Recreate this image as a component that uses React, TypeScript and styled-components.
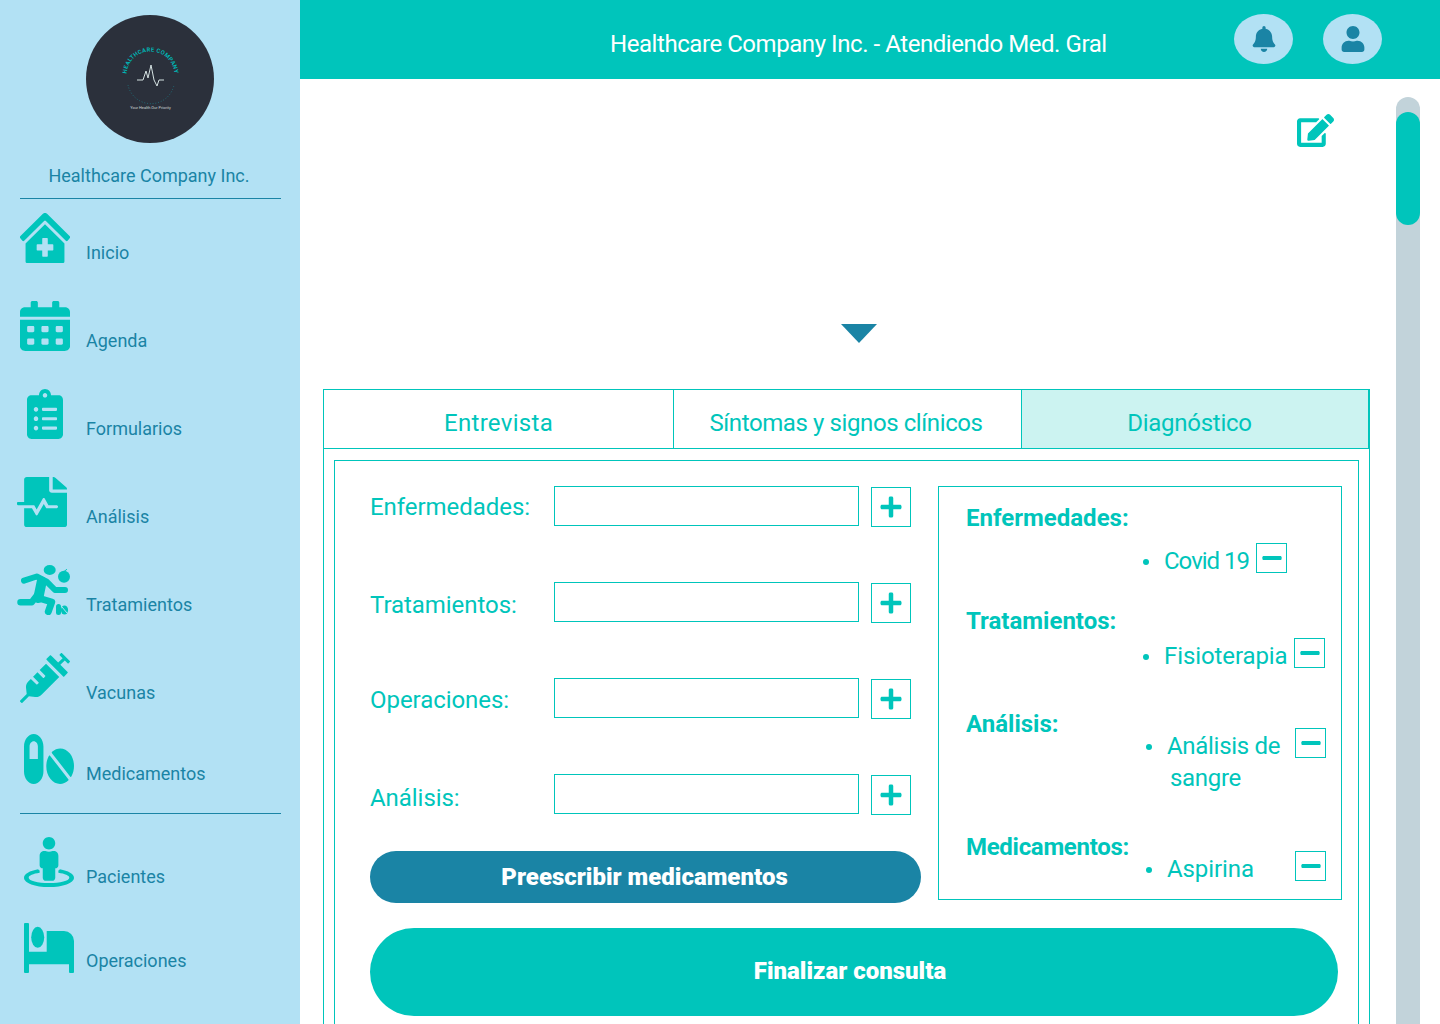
import React from 'react';
import styled, { createGlobalStyle } from 'styled-components';
import {
    FaBell,
    FaCalendarAlt,
    FaClinicMedical,
    FaClipboardList,
    FaEdit,
    FaFileMedicalAlt,
    FaMinus,
    FaPills,
    FaPlus,
    FaStreetView,
    FaSyringe,
    FaUser
} from 'react-icons/fa';

const TEAL = '#00c5bb';
const BLUE = '#1a84a5';
const SKY = '#b2e1f4';

const GlobalStyle = createGlobalStyle`
    html, body {
        margin: 0;
        height: 1024px;
        overflow: hidden;
        background: #fff;
        font-family: Roboto, "Liberation Sans", sans-serif;
    }
    * {
        box-sizing: border-box;
    }
`;

const Page = styled.div`
    display: flex;
    width: 1440px;
    height: 1024px;
    overflow: hidden;
`;

const Sidebar = styled.aside`
    flex: 0 0 300px;
    display: flex;
    flex-direction: column;
    padding-top: 15px;
    background: ${SKY};
`;

const LogoCircle = styled.svg`
    display: block;
    width: 128px;
    height: 128px;
    margin-left: 86px;
`;

const Company = styled.div`
    margin-top: 22px;
    padding-right: 2px;
    font-size: 18px;
    line-height: 22px;
    text-align: center;
    color: ${BLUE};
`;

const Rule = styled.hr<{ $top: number }>`
    width: 261px;
    height: 1px;
    margin: ${p => p.$top}px 0 0 20px;
    border: none;
    background: ${BLUE};
`;

const NavItem = styled.a<{ $top: number }>`
    display: flex;
    align-items: flex-end;
    height: 50px;
    margin-top: ${p => p.$top}px;
    padding-left: 17px;
    color: ${BLUE};
`;

const NavLabel = styled.span<{ $raise?: number }>`
    margin-bottom: ${p => p.$raise || 0}px;
    font-size: 18px;
    line-height: 21px;
`;

const IconSlot = styled.span<{ $left: number; $width?: number }>`
    flex: 0 0 69px;
    display: block;
    height: 50px;
    padding-left: ${p => p.$left}px;
    color: ${TEAL};

    svg {
        display: block;
        width: ${p => p.$width || 50}px;
        height: 50px;
    }
`;

const Main = styled.div`
    flex: 1;
    display: flex;
    flex-direction: column;
    min-width: 0;
`;

const Header = styled.header`
    flex: 0 0 79px;
    display: flex;
    align-items: flex-start;
    padding: 14px 58px 0 310px;
    background: ${TEAL};
`;

const HeaderTitle = styled.h1`
    margin: 15px 0 0;
    font-size: 24px;
    font-weight: 400;
    line-height: 30px;
    letter-spacing: -0.44px;
    white-space: nowrap;
    color: #fff;
`;

const HeaderActions = styled.div`
    display: flex;
    gap: 30px;
    margin-left: auto;
`;

const RoundButton = styled.button`
    display: flex;
    align-items: center;
    justify-content: center;
    width: 59px;
    height: 50px;
    padding: 0;
    border: none;
    border-radius: 50%;
    background: ${SKY};
    color: ${BLUE};

    svg {
        width: 24px;
        height: 26px;
    }
`;

const Body = styled.div`
    flex: 1;
    display: flex;
    min-height: 0;
    padding-left: 23px;
`;

const Content = styled.main`
    flex: 0 0 1047px;
    display: flex;
    flex-direction: column;
`;

const Summary = styled.section`
    flex: 0 0 310px;
    display: flex;
    flex-direction: column;
    padding-top: 33px;
`;

const EditIcon = styled(FaEdit)`
    align-self: flex-end;
    width: 37px;
    height: 37px;
    margin-right: 36px;
    color: ${TEAL};
`;

const Caret = styled.div`
    align-self: center;
    width: 0;
    height: 0;
    margin: 175px 0 0 25px;
    border-style: solid;
    border-width: 19px 18px 0;
    border-color: ${BLUE} transparent transparent;
`;

const Panel = styled.section`
    flex: 1;
    border: solid ${TEAL};
    border-width: 0 1px;
`;

const Tabs = styled.nav`
    display: grid;
    grid-template-columns: 350px 348px 347px;
    height: 60px;
`;

const Tab = styled.div<{ $active?: boolean; $shift?: number; $track?: number }>`
    display: flex;
    align-items: center;
    justify-content: center;
    padding: 8px ${p => p.$shift || 0}px 0 0;
    border: solid ${TEAL};
    border-width: 1px 1px 1px 0;
    background: ${p => (p.$active ? '#ccf3f1' : '#fff')};
    font-size: 24px;
    letter-spacing: ${p => p.$track || 0}px;
    color: ${TEAL};

    :first-child {
        border-left-width: 1px;
    }

    :last-child {
        border-right-width: 0;
    }
`;

const Sheet = styled.div`
    height: 600px;
    margin: 11px 10px 0;
    padding: 25px 0 0 35px;
    border: 1px solid ${TEAL};
`;

const Columns = styled.div`
    display: flex;
    align-items: flex-start;
    gap: 17px;
`;

const FormColumn = styled.div`
    flex: 0 0 551px;
    display: flex;
    flex-direction: column;
`;

const Fields = styled.div`
    display: flex;
    flex-direction: column;
    gap: 55px;
`;

const Field = styled.div`
    display: flex;
    align-items: flex-start;
    height: 41px;
`;

const FieldLabel = styled.label<{ $shift: number }>`
    flex: 0 0 184px;
    margin-top: ${p => p.$shift}px;
    font-size: 24px;
    line-height: 30px;
    letter-spacing: -0.05px;
    color: ${TEAL};
`;

const TextInput = styled.input`
    width: 305px;
    height: 40px;
    padding: 0 8px;
    border: 1px solid ${TEAL};
    background: #fff;
    outline: none;
`;

const AddButton = styled.button`
    display: flex;
    align-items: center;
    justify-content: center;
    width: 40px;
    height: 40px;
    margin: 1px 0 0 12px;
    padding: 0;
    border: 1px solid ${TEAL};
    background: #fff;
    color: ${TEAL};

    svg {
        width: 22px;
        height: 24px;
    }
`;

const PrescribeButton = styled.button`
    height: 52px;
    margin-top: 36px;
    padding: 0 2px 0 0;
    border: none;
    border-radius: 26px;
    background: ${BLUE};
    font-family: inherit;
    font-size: 24px;
    font-weight: 900;
    color: #fff;
`;

const Diagnosis = styled.div`
    flex: 0 0 404px;
    height: 414px;
    padding: 21px 0 0 27px;
    border: 1px solid ${TEAL};
`;

const DiagnosisTitle = styled.h3<{ $top?: number; $track?: number }>`
    margin: ${p => p.$top || 0}px 0 0;
    font-size: 24px;
    font-weight: 700;
    line-height: 20px;
    letter-spacing: ${p => p.$track || 0}px;
    color: ${TEAL};
`;

const DiagnosisItem = styled.div<{ $top: number; $left: number }>`
    display: flex;
    align-items: flex-start;
    margin: ${p => p.$top}px 0 0 ${p => p.$left}px;
    font-size: 24px;
    line-height: 32px;
    color: ${TEAL};
`;

const Bullet = styled.span`
    flex: 0 0 6px;
    height: 6px;
    margin-top: 16px;
    border-radius: 50%;
    background: ${TEAL};
`;

const ItemText = styled.span<{ $fixed?: boolean; $track?: number }>`
    margin: 2px 7px 0 15px;
    letter-spacing: ${p => p.$track || 0}px;

    ${p =>
        p.$fixed &&
        `
        flex: 0 0 125px;
        margin: 2px 0 0 18px;
        text-indent: -3px;
    `}
`;

const RemoveButton = styled.button`
    display: flex;
    justify-content: center;
    flex: 0 0 31px;
    height: 30px;
    padding: 3px 0 0;
    border: 1px solid ${TEAL};
    background: #fff;
    color: ${TEAL};

    svg {
        width: 22px;
        height: 22px;
    }
`;

const FinishButton = styled.button`
    display: block;
    width: 968px;
    height: 88px;
    margin-top: 25px;
    padding: 0 8px 2px 0;
    border: none;
    border-radius: 44px;
    background: ${TEAL};
    font-family: inherit;
    font-size: 24px;
    font-weight: 900;
    color: #fff;
`;

const ScrollTrack = styled.div`
    position: relative;
    flex: 0 0 24px;
    margin: 18px 0 0 26px;
    border-radius: 12px 12px 0 0;
    background: #c2d3da;
`;

const ScrollThumb = styled.div`
    position: absolute;
    top: 15px;
    left: 0;
    width: 24px;
    height: 113px;
    border-radius: 12px;
    background: ${TEAL};
`;

const Logo = () => (
    <LogoCircle viewBox="0 0 128 128">
        <circle cx="64" cy="64" r="64" fill="#2b303b" />
        <defs>
            <path id="logo-arc" d="M41.95 68.7 A24 24 0 1 1 87.05 68.7" />
        </defs>
        <text
            fill="#00b5b5"
            fontFamily="Roboto, sans-serif"
            fontSize="5.8"
            fontWeight="700"
            letterSpacing="0.35"
            textAnchor="middle"
        >
            <textPath href="#logo-arc" startOffset="50%">
                HEALTHCARE COMPANY
            </textPath>
        </text>
        <polyline
            points="51,65 57,65 60,56 62,63 65,50 68,65 71,71 73,65 78,65"
            fill="none"
            stroke="#d5e2e2"
            strokeWidth="1"
        />
        <path
            d="M42 70 A23.5 23.5 0 0 0 88 70"
            fill="none"
            stroke="#1b8a96"
            strokeWidth="0.8"
            strokeDasharray="0.8 2"
        />
        <text
            x="64.5"
            y="94"
            fill="#cfd6d8"
            fontFamily="Roboto, sans-serif"
            fontSize="3.9"
            textAnchor="middle"
        >
            Your Health Our Priority
        </text>
    </LogoCircle>
);

const RunnerIcon = () => (
    <svg viewBox="0 0 53 50" fill="none" stroke="currentColor" strokeLinecap="round" strokeLinejoin="round">
        <ellipse cx="32.7" cy="5" rx="6" ry="5" fill="currentColor" stroke="none" />
        <path d="M7 15.7L19.7 11.5L29.7 16.7L38 25H48" strokeWidth="6" />
        <path d="M24.7 16.7L21.3 33" strokeWidth="10" />
        <path d="M21.3 33L34.7 37L31.3 46.7" strokeWidth="7" />
        <path d="M3.5 37.3H14.7L20.3 30" strokeWidth="6.5" />
        <circle cx="47" cy="11.7" r="6" fill="currentColor" stroke="none" />
        <path d="M47 6.5L49.7 4.5" strokeWidth="1" />
        <rect x="39" y="39" width="5" height="11" rx="2.5" fill="currentColor" stroke="none" />
        <ellipse cx="47.5" cy="45" rx="3.6" ry="4.6" fill="currentColor" stroke="none" />
        <path d="M45 42L50 48" stroke={SKY} strokeWidth="1" />
    </svg>
);

const BedIcon = () => (
    <svg viewBox="0 0 50 50" fill="currentColor">
        <path d="M1 0h3a1 1 0 0 1 1 1v27.7h17.7V8H40a10 10 0 0 1 10 10v31a1 1 0 0 1-1 1h-3a1 1 0 0 1-1-1v-7.7H5V49a1 1 0 0 1-1 1H1a1 1 0 0 1-1-1V1a1 1 0 0 1 1-1z" />
        <ellipse cx="13.7" cy="14.3" rx="6.5" ry="10.5" />
    </svg>
);

const stretch = { preserveAspectRatio: 'none' };

const fields = [
    { label: 'Enfermedades:', shift: 6 },
    { label: 'Tratamientos:', shift: 8 },
    { label: 'Operaciones:', shift: 7 },
    { label: 'Análisis:', shift: 9 }
];

const App: React.FC = () => (
    <Page>
        <GlobalStyle />
        <Sidebar>
            <Logo />
            <Company>Healthcare Company Inc.</Company>
            <Rule $top={11} />
            <NavItem $top={14}>
                <IconSlot $left={3}>
                    <FaClinicMedical {...stretch} />
                </IconSlot>
                <NavLabel>Inicio</NavLabel>
            </NavItem>
            <NavItem $top={38}>
                <IconSlot $left={3}>
                    <FaCalendarAlt {...stretch} />
                </IconSlot>
                <NavLabel>Agenda</NavLabel>
            </NavItem>
            <NavItem $top={38}>
                <IconSlot $left={10} $width={36}>
                    <FaClipboardList {...stretch} />
                </IconSlot>
                <NavLabel>Formularios</NavLabel>
            </NavItem>
            <NavItem $top={38}>
                <IconSlot $left={0}>
                    <FaFileMedicalAlt {...stretch} />
                </IconSlot>
                <NavLabel>Análisis</NavLabel>
            </NavItem>
            <NavItem $top={38}>
                <IconSlot $left={0} $width={53}>
                    <RunnerIcon />
                </IconSlot>
                <NavLabel>Tratamientos</NavLabel>
            </NavItem>
            <NavItem $top={38}>
                <IconSlot $left={3}>
                    <FaSyringe {...stretch} />
                </IconSlot>
                <NavLabel>Vacunas</NavLabel>
            </NavItem>
            <NavItem $top={31}>
                <IconSlot $left={7}>
                    <FaPills {...stretch} viewBox="0 32 576 448" />
                </IconSlot>
                <NavLabel>Medicamentos</NavLabel>
            </NavItem>
            <Rule $top={29} />
            <NavItem $top={23}>
                <IconSlot $left={7}>
                    <FaStreetView {...stretch} />
                </IconSlot>
                <NavLabel>Pacientes</NavLabel>
            </NavItem>
            <NavItem $top={36}>
                <IconSlot $left={7}>
                    <BedIcon />
                </IconSlot>
                <NavLabel $raise={2}>Operaciones</NavLabel>
            </NavItem>
        </Sidebar>
        <Main>
            <Header>
                <HeaderTitle>Healthcare Company Inc. - Atendiendo Med. Gral</HeaderTitle>
                <HeaderActions>
                    <RoundButton>
                        <FaBell />
                    </RoundButton>
                    <RoundButton>
                        <FaUser />
                    </RoundButton>
                </HeaderActions>
            </Header>
            <Body>
                <Content>
                    <Summary>
                        <EditIcon />
                        <Caret />
                    </Summary>
                    <Panel>
                        <Tabs>
                            <Tab $track={0.3}>Entrevista</Tab>
                            <Tab $shift={3} $track={-0.4}>
                                Síntomas y signos clínicos
                            </Tab>
                            <Tab $active $shift={11} $track={-0.25}>
                                Diagnóstico
                            </Tab>
                        </Tabs>
                        <Sheet>
                            <Columns>
                                <FormColumn>
                                    <Fields>
                                        {fields.map(field => (
                                            <Field key={field.label}>
                                                <FieldLabel $shift={field.shift}>{field.label}</FieldLabel>
                                                <TextInput />
                                                <AddButton>
                                                    <FaPlus />
                                                </AddButton>
                                            </Field>
                                        ))}
                                    </Fields>
                                    <PrescribeButton>Preescribir medicamentos</PrescribeButton>
                                </FormColumn>
                                <Diagnosis>
                                    <DiagnosisTitle>Enfermedades:</DiagnosisTitle>
                                    <DiagnosisItem $top={15} $left={177}>
                                        <Bullet />
                                        <ItemText $track={-1}>Covid 19</ItemText>
                                        <RemoveButton>
                                            <FaMinus />
                                        </RemoveButton>
                                    </DiagnosisItem>
                                    <DiagnosisTitle $top={34}>Tratamientos:</DiagnosisTitle>
                                    <DiagnosisItem $top={7} $left={177}>
                                        <Bullet />
                                        <ItemText $track={-0.1}>Fisioterapia</ItemText>
                                        <RemoveButton>
                                            <FaMinus />
                                        </RemoveButton>
                                    </DiagnosisItem>
                                    <DiagnosisTitle $top={42}>Análisis:</DiagnosisTitle>
                                    <DiagnosisItem $top={-6} $left={180}>
                                        <Bullet />
                                        <ItemText $fixed $track={-0.3}>
                                            Análisis de sangre
                                        </ItemText>
                                        <RemoveButton>
                                            <FaMinus />
                                        </RemoveButton>
                                    </DiagnosisItem>
                                    <DiagnosisTitle $top={43} $track={-0.3}>
                                        Medicamentos:
                                    </DiagnosisTitle>
                                    <DiagnosisItem $top={-6} $left={180}>
                                        <Bullet />
                                        <ItemText $fixed $track={-0.1}>
                                            Aspirina
                                        </ItemText>
                                        <RemoveButton>
                                            <FaMinus />
                                        </RemoveButton>
                                    </DiagnosisItem>
                                </Diagnosis>
                            </Columns>
                            <FinishButton>Finalizar consulta</FinishButton>
                        </Sheet>
                    </Panel>
                </Content>
                <ScrollTrack>
                    <ScrollThumb />
                </ScrollTrack>
            </Body>
        </Main>
    </Page>
);

export default App;
